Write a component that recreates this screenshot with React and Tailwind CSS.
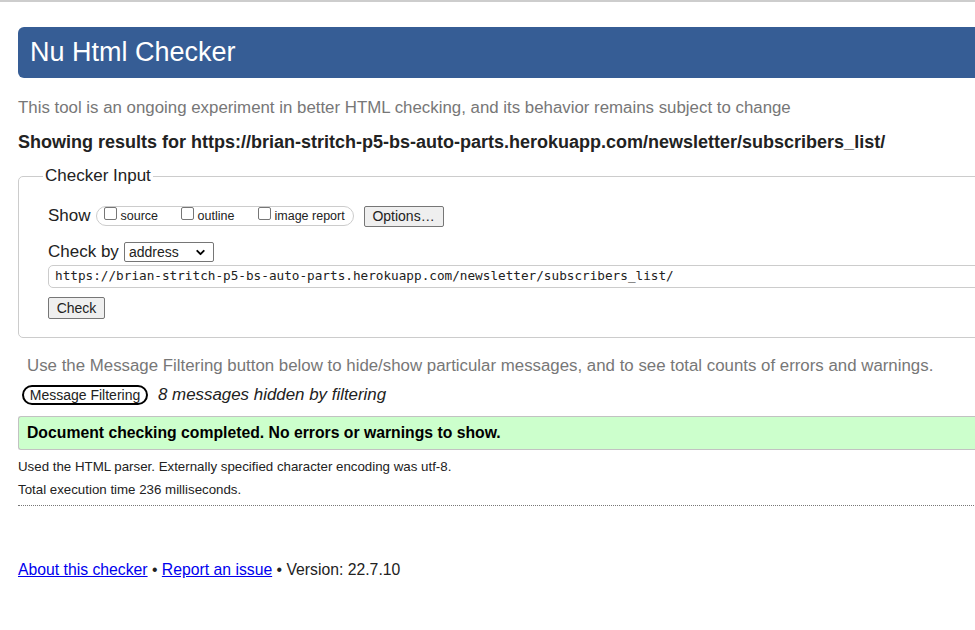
import React from "react";
import { ChevronDown } from "lucide-react";

const url = "https://brian-stritch-p5-bs-auto-parts.herokuapp.com/newsletter/subscribers_list/";

const showOptions = [
  { label: "source", width: "w-[77px]" },
  { label: "outline", width: "w-[77px]" },
  { label: "image report", width: "w-auto" },
];

const Checkbox = () => (
  <span className="inline-block w-[13px] h-[13px] border border-[#767676] rounded-[2px] bg-white mr-[4px] -mt-[5px]" />
);

const App = () => {
  return (
    <div className="min-h-screen w-full overflow-hidden bg-white border-t-2 border-[#cdcdcd] text-[#222] font-['Liberation_Sans',Arial,sans-serif]">
      <div className="pl-[18px] w-[1020px]">
        {/* Header */}
        <div className="mt-[25px] h-[51px] bg-[#365d95] rounded-l-[6px] pl-[12px] flex items-center">
          <h1 className="text-white text-[27px] leading-none">Nu Html Checker</h1>
        </div>

        <p className="mt-[20px] text-[16.85px] leading-[20px] text-[#777]">
          This tool is an ongoing experiment in better HTML checking, and its behavior remains subject to change
        </p>
        <p className="mt-[14px] text-[18px] leading-[20px] font-bold text-[#222]">
          Showing results for {url}
        </p>

        {/* Checker Input */}
        <fieldset className="mt-[14px] border border-[#ccc] rounded-[5px] pl-[29px] pt-[19px] pb-[18px]">
          <legend className="ml-[-5px] px-[2px] text-[17px] leading-[20px]">Checker Input</legend>

          <div className="flex items-center h-[22px]">
            <span className="text-[17px]">Show</span>
            <div className="ml-[5px] h-[20px] w-[258px] border border-[#ccc] rounded-full flex items-center pl-[7px]">
              {showOptions.map((opt) => (
                <label key={opt.label} className={`flex items-center text-[12.5px] ${opt.width}`}>
                  <Checkbox />
                  {opt.label}
                </label>
              ))}
            </div>
            <button className="ml-[10px] h-[21px] w-[80px] bg-[#efefef] border border-[#767676] rounded-[2px] text-[14px] leading-none">
              Options…
            </button>
          </div>

          <div className="flex items-center h-[22px] mt-[14px]">
            <span className="text-[17px]">Check by</span>
            <div className="ml-[5px] h-[20px] w-[90px] border border-[#767676] rounded-[2px] flex items-center justify-between pl-[4px] pr-[6px]">
              <span className="text-[14px] leading-none">address</span>
              <ChevronDown size={13} strokeWidth={3.5} className="text-black" />
            </div>
          </div>

          <div className="mt-[2px] h-[23px] border border-[#ccc] rounded-[5px] flex items-center pl-[6px]">
            <span className="font-['DejaVu_Sans_Mono',monospace] text-[12.7px] leading-none">{url}</span>
          </div>

          <div className="mt-[9px] flex">
            <button className="h-[22px] w-[57px] bg-[#efefef] border border-[#767676] rounded-[2px] text-[14px] leading-none">
              Check
            </button>
          </div>
        </fieldset>

        <p className="mt-[18px] pl-[9px] text-[16.85px] leading-[20px] text-[#777]">
          Use the Message Filtering button below to hide/show particular messages, and to see total counts of errors and warnings.
        </p>

        <div className="mt-[9px] flex items-center h-[20px]">
          <button className="ml-[4px] h-[20px] w-[126px] border-2 border-black rounded-[10px] text-[14px] leading-none">
            Message Filtering
          </button>
          <span className="ml-[10px] text-[16.9px] italic">8 messages hidden by filtering</span>
        </div>

        <div className="mt-[11px] h-[34px] bg-[#ccffcc] border border-r-0 border-[#c2c2c2] rounded-l-[3px] flex items-center pl-[8px]">
          <span className="text-[15.75px] font-bold text-black">Document checking completed. No errors or warnings to show.</span>
        </div>

        <p className="mt-[8px] text-[13.3px] leading-[17px]">
          Used the HTML parser. Externally specified character encoding was utf-8.
        </p>
        <p className="mt-[6px] text-[13.3px] leading-[17px]">Total execution time 236 milliseconds.</p>

        <div className="mt-[7px] border-t border-dotted border-[#777]" />

        <p className="mt-[54px] text-[15.75px] leading-[20px]">
          <a href="#" className="text-[#0000ee] underline">About this checker</a> •{" "}
          <a href="#" className="text-[#0000ee] underline">Report an issue</a> • Version: 22.7.10
        </p>
      </div>
    </div>
  );
};

export default App;
